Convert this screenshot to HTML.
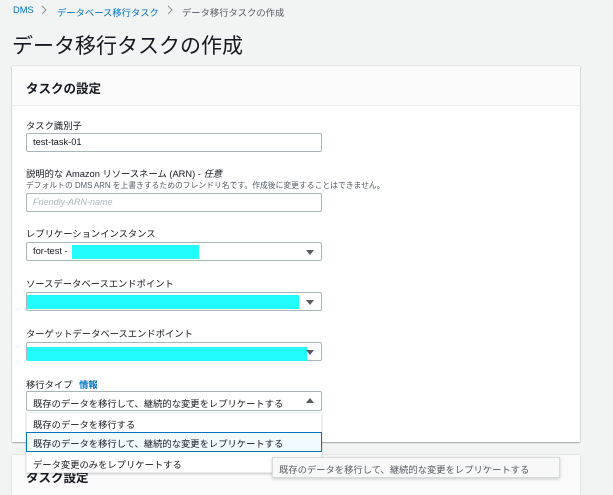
<!DOCTYPE html>
<html><head><meta charset="utf-8"><style>
*{box-sizing:border-box;margin:0;padding:0}
body{width:613px;height:485px;overflow:hidden;background:#f2f3f3;font-family:"Liberation Sans","Noto Sans CJK JP",sans-serif;color:#16191f;position:relative}
.a{position:absolute}
.t{font-size:9.3px;white-space:nowrap}
.box{position:absolute;border:1px solid #aab7b8;background:#fff;border-radius:2px}
.cy{position:absolute;background:#22fcfd}
.arr{position:absolute;width:0;height:0;border-left:4px solid transparent;border-right:4px solid transparent;border-top:5px solid #545b64}
</style></head><body>
<div class="a t" style="left:13px;top:5px;color:#0073bb">DMS</div>
<svg class="a" style="left:40px;top:5px" width="8" height="10"><path d="M2 1l4 4-4 4" fill="none" stroke="#879596" stroke-width="1"/></svg>
<div class="a t" style="left:57px;top:5px;color:#0073bb">データベース移行タスク</div>
<svg class="a" style="left:166px;top:5px" width="8" height="10"><path d="M2 1l4 4-4 4" fill="none" stroke="#879596" stroke-width="1"/></svg>
<div class="a t" style="left:182px;top:5px;color:#545b64">データ移行タスクの作成</div>
<div class="a" style="left:12px;top:30px;font-size:21px;white-space:nowrap">データ移行タスクの作成</div>

<div class="a" style="left:12px;top:66px;width:568px;height:376px;background:#fff;box-shadow:0 1px 1px rgba(0,28,36,.3),0 0 1px rgba(0,28,36,.3)"></div>
<div class="a" style="left:12px;top:66px;width:568px;height:40px;background:#fafafa;border-bottom:1px solid #eaeded"></div>
<div class="a" style="left:26px;top:78px;font-size:12.5px;font-weight:bold">タスクの設定</div>

<div class="a" style="left:12px;top:455px;width:568px;height:40px;background:#fafafa;box-shadow:0 0 1px rgba(0,28,36,.3)"></div>
<div class="a" style="left:26px;top:467px;font-size:12.5px;font-weight:bold">タスク設定</div>

<div class="a t" style="left:26px;top:118px">タスク識別子</div>
<div class="box" style="left:26px;top:133px;width:296px;height:19px"></div>
<div class="a t" style="left:33px;top:137px">test-task-01</div>

<div class="a t" style="left:26px;top:166px">説明的な Amazon リソースネーム (ARN) - <i>任意</i></div>
<div class="a" style="left:26px;top:180px;font-size:7.8px;color:#545b64;white-space:nowrap">デフォルトの DMS ARN を上書きするためのフレンドリ名です。作成後に変更することはできません。</div>
<div class="box" style="left:26px;top:193px;width:296px;height:19px"></div>
<div class="a t" style="left:33px;top:197px;color:#aab7b8;font-style:italic;font-size:9px">Friendly-ARN-name</div>

<div class="a t" style="left:26px;top:226px">レプリケーションインスタンス</div>
<div class="box" style="left:26px;top:242px;width:296px;height:19px"></div>
<div class="a t" style="left:33px;top:246px">for-test -</div>
<div class="cy" style="left:72px;top:245px;width:127px;height:14px"></div>
<div class="arr" style="left:306px;top:250px"></div>

<div class="a t" style="left:26px;top:276px">ソースデータベースエンドポイント</div>
<div class="box" style="left:26px;top:292px;width:296px;height:19px"></div>
<div class="cy" style="left:27px;top:295px;width:272px;height:14px"></div>
<div class="arr" style="left:306px;top:300px"></div>

<div class="a t" style="left:26px;top:326px">ターゲットデータベースエンドポイント</div>
<div class="box" style="left:26px;top:342px;width:296px;height:19px"></div>
<div class="cy" style="left:27px;top:347px;width:280px;height:14px"></div>
<div class="arr" style="left:306px;top:350px"></div>

<div class="a t" style="left:26px;top:377px">移行タイプ <b style="color:#0073bb;margin-left:4px">情報</b></div>
<div class="box" style="left:26px;top:391px;width:296px;height:20px"></div>
<div class="a t" style="left:33px;top:396px">既存のデータを移行して、継続的な変更をレプリケートする</div>
<div class="a" style="left:306px;top:398px;width:0;height:0;border-left:4px solid transparent;border-right:4px solid transparent;border-bottom:5px solid #545b64"></div>

<div class="a" style="left:26px;top:412px;width:296px;height:61px;background:#fff;border:1px solid #eaeded;box-shadow:0 1px 2px rgba(0,0,0,.2)"></div>
<div class="a t" style="left:33px;top:417px">既存のデータを移行する</div>
<div class="a" style="left:26px;top:432px;width:296px;height:20px;background:#f1faff;border:1px solid #0073bb"></div>
<div class="a t" style="left:33px;top:436px">既存のデータを移行して、継続的な変更をレプリケートする</div>
<div class="a t" style="left:33px;top:457px">データ変更のみをレプリケートする</div>

<div class="a" style="left:272px;top:457px;width:288px;height:21px;background:#f8f8f8;border:1px solid #d5dbdb;box-shadow:0 1px 3px rgba(0,0,0,.2)"></div>
<div class="a t" style="left:279px;top:462px;color:#545b64">既存のデータを移行して、継続的な変更をレプリケートする</div>
</body></html>
